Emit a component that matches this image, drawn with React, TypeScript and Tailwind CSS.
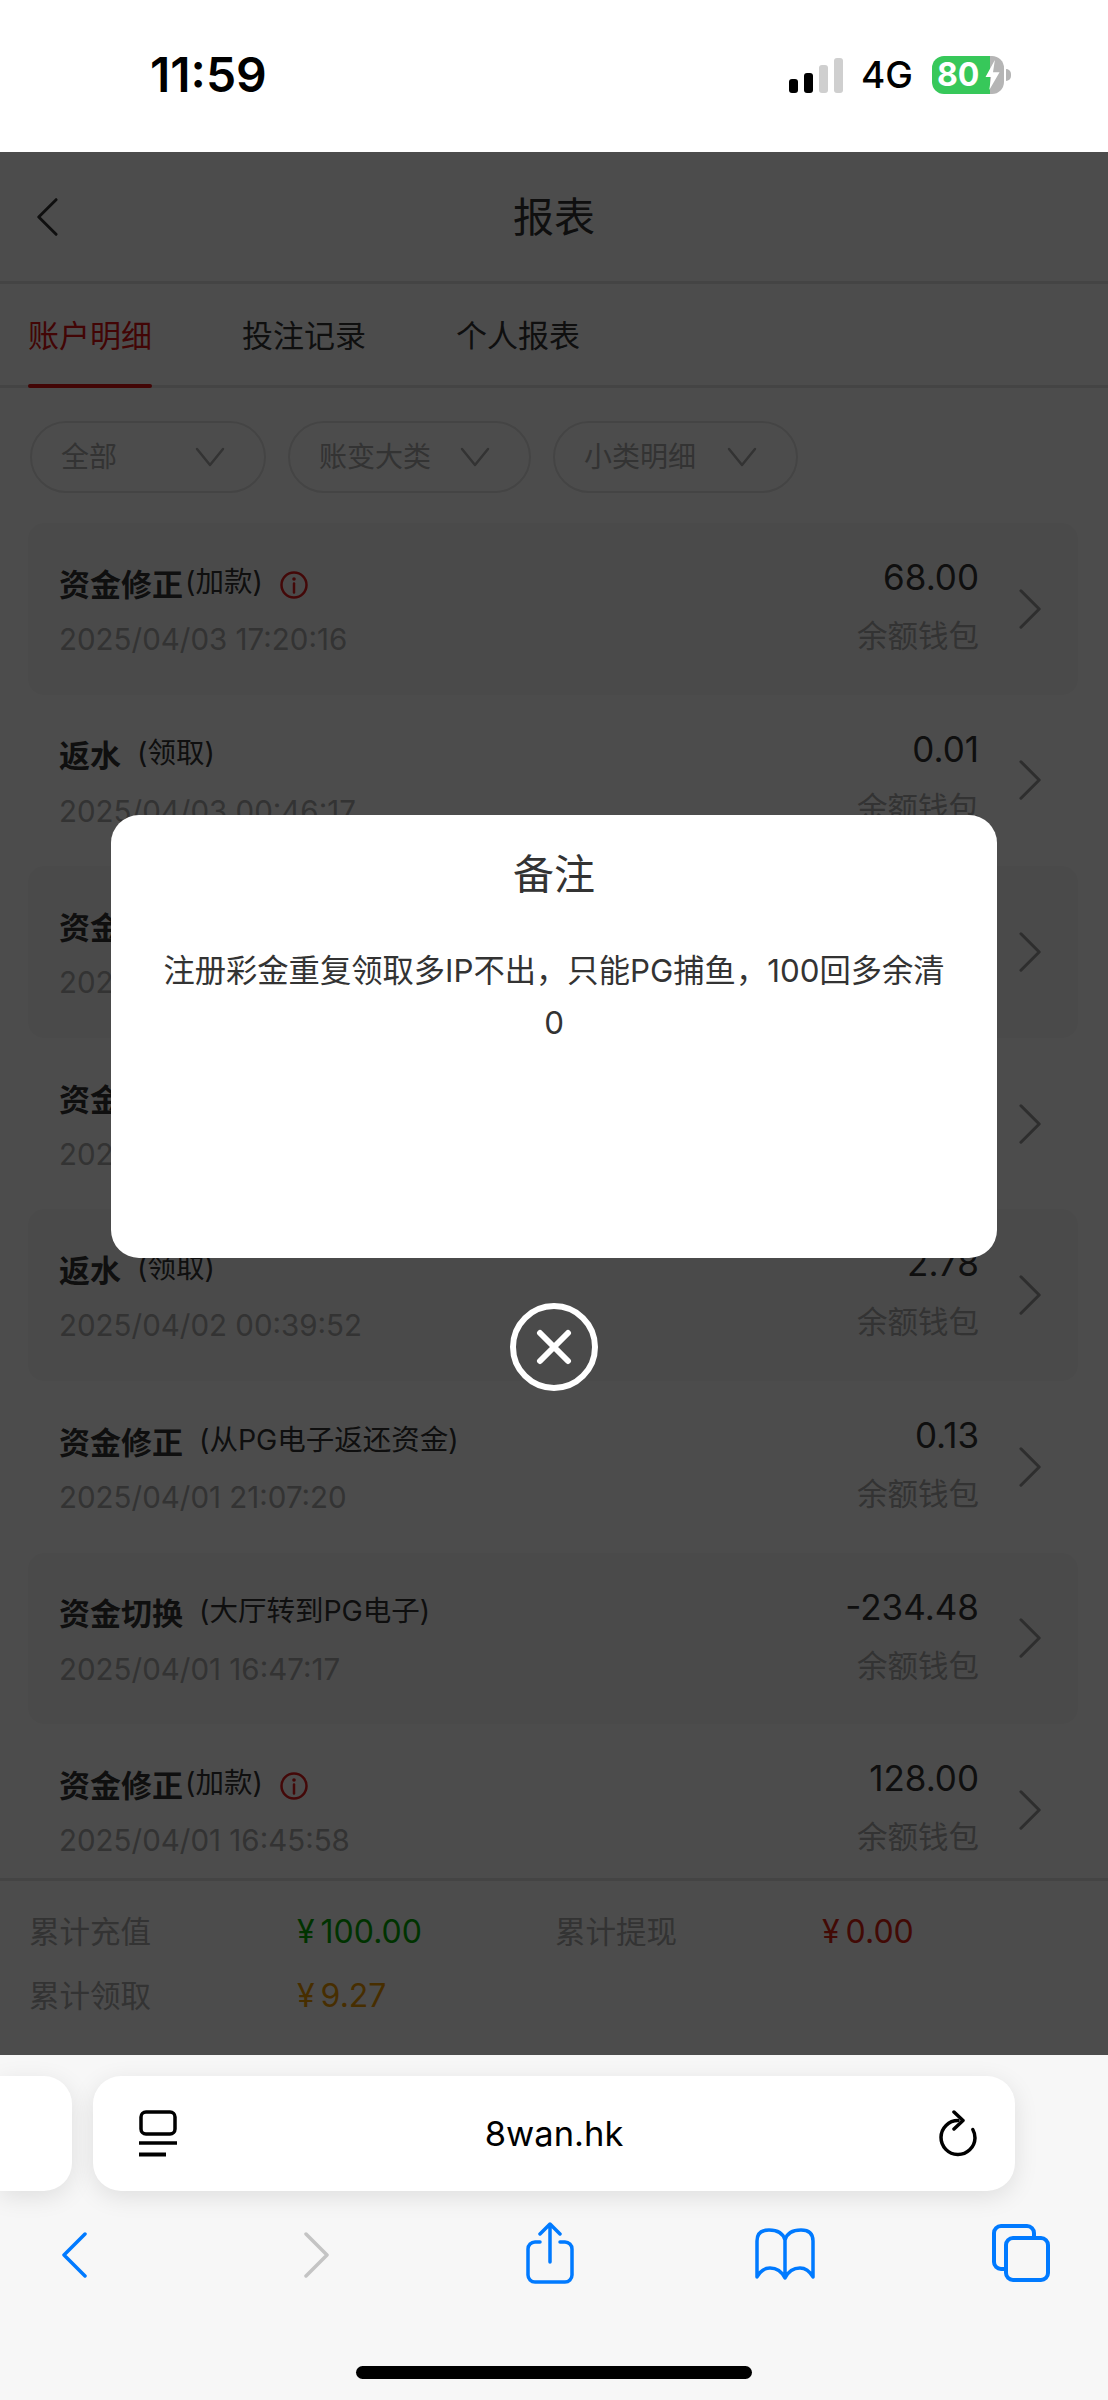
const rows = [
  { title: "资金修正", sub: "(加款)", info: true, date: "2025/04/03 17:20:16", amount: "68.00", wallet: "余额钱包" },
  { title: "返水", sub: "(领取)", date: "2025/04/03 00:46:17", amount: "0.01", wallet: "余额钱包" },
  // the next two sit behind the dialog, only the start of each line shows
  { title: "资金", date: "2025" },
  { title: "资金", date: "2025" },
  { title: "返水", sub: "(领取)", date: "2025/04/02 00:39:52", amount: "2.78", wallet: "余额钱包" },
  { title: "资金修正", sub: "(从PG电子返还资金)", date: "2025/04/01 21:07:20", amount: "0.13", wallet: "余额钱包" },
  { title: "资金切换", sub: "(大厅转到PG电子)", date: "2025/04/01 16:47:17", amount: "-234.48", wallet: "余额钱包" },
  { title: "资金修正", sub: "(加款)", info: true, date: "2025/04/01 16:45:58", amount: "128.00", wallet: "余额钱包" },
];

type RowData = { title: string; sub?: string; info?: boolean; date: string; amount?: string; wallet?: string };

function Chevron({ dir, className }: { dir: "left" | "right"; className: string }) {
  return (
    <svg viewBox="0 0 26 46" fill="none" stroke="currentColor" strokeWidth="3.5" strokeLinecap="round" strokeLinejoin="round" className={className}>
      {dir === "left" ? <path d="M24 2 3 23l21 21" /> : <path d="M2 2l21 21L2 44" />}
    </svg>
  );
}

function Down() {
  return (
    <svg viewBox="0 0 30 20" fill="none" stroke="currentColor" strokeWidth="2.5" strokeLinecap="round" strokeLinejoin="round" className="w-[30px] h-[20px] text-[#aaaaaa]">
      <path d="M2 2l13 16L28 2" />
    </svg>
  );
}

function Info() {
  return (
    <svg viewBox="0 0 28 28" fill="none" className="w-[28px] h-[28px] text-[#e11d1d] ml-[17px] shrink-0">
      <circle cx="14" cy="14" r="12.5" stroke="currentColor" strokeWidth="2.5" />
      <circle cx="14" cy="8" r="1.8" fill="currentColor" />
      <path d="M14 12.5v9" stroke="currentColor" strokeWidth="2.5" strokeLinecap="round" />
    </svg>
  );
}

function Row({ row, shaded }: { row: RowData; shaded: boolean }) {
  return (
    <div className={`h-[171.6px] shrink-0 rounded-[16px] flex pl-[31px] pr-[35px] ${shaded ? "bg-[#f9f9f9]" : ""}`}>
      <div className="flex-1 pt-[40px]">
        <div className="flex items-center h-[44px]">
          <span className="text-[31px] font-bold text-[#333333]">{row.title}</span>
          {row.sub && (
            <span className={`text-[28.5px] text-[#333333] relative -top-[3px] ${row.info ? "ml-[2px]" : "ml-[16px]"}`}>{row.sub}</span>
          )}
          {row.info && <Info />}
        </div>
        <div className="mt-[12px] text-[29.5px] leading-[40px] text-[#aaaaaa]">{row.date}</div>
      </div>
      <div className="flex flex-col items-end pt-[32px]">
        <div className="text-[35px] leading-[44px] text-[#333333]">{row.amount}</div>
        <div className="mt-[17px] text-[30.5px] leading-[40px] text-[#aaaaaa]">{row.wallet}</div>
      </div>
      <div className="w-[64px] flex items-center justify-end">
        <Chevron dir="right" className="w-[25px] h-[40px] text-[#999999]" />
      </div>
    </div>
  );
}

export default function App() {
  return (
    <div className="w-[1108px] h-[2400px] overflow-hidden bg-white flex flex-col font-['Inter','Noto_Sans_CJK_SC',sans-serif]">
      {/* ios status bar */}
      <div className="h-[152px] shrink-0 flex items-center pl-[150px] pr-[97px] pb-[2px]">
        <div className="text-[48px] font-semibold text-black">11:59</div>
        <div className="ml-auto flex items-center">
          <div className="flex items-end gap-[6px] h-[35px]">
            <div className="w-[9px] h-[14px] rounded-[3px] bg-black" />
            <div className="w-[9px] h-[20px] rounded-[3px] bg-black" />
            <div className="w-[9px] h-[28px] rounded-[3px] bg-[#cfcfcf]" />
            <div className="w-[9px] h-[35px] rounded-[3px] bg-[#cfcfcf]" />
          </div>
          <div className="ml-[18px] text-[37px] font-medium text-black">4G</div>
          <div className="ml-[19px] relative flex items-center">
            <div className="w-[72px] h-[38px] rounded-[12px] overflow-hidden flex">
              <div className="w-[58px] bg-[#37c85a] flex items-center pl-[5px] text-[32px] font-bold text-white">80</div>
              <div className="w-[14px] bg-[#b5b5b5]" />
            </div>
            <svg viewBox="0 0 18 32" className="absolute left-[52px] top-[4px] w-[18px] h-[30px] text-white">
              <path d="M11 0 1 18h6l-2 14 11-19h-7z" fill="currentColor" />
            </svg>
            <div className="ml-[2px] w-[5px] h-[12px] rounded-r-full bg-[#b5b5b5]" />
          </div>
        </div>
      </div>

      {/* page under the dialog */}
      <div className="h-[1903px] shrink-0 relative flex flex-col">
        <div className="h-[132px] shrink-0 relative flex items-center justify-center pt-[3px] border-b-[3px] border-[#e3e3e3]">
          <Chevron dir="left" className="absolute left-[35px] top-[46px] w-[24px] h-[38px] text-[#333333]" />
          <div className="text-[41px] text-[#333333]">报表</div>
        </div>
        <div className="h-[104px] shrink-0 flex pl-[28px] gap-[90px] pt-[3px] border-b-[3px] border-[#e3e3e3] text-[31px] text-[#333333]">
          <div className="h-full w-[124px] relative flex items-center text-[#dd1111] whitespace-nowrap">
            账户明细
            <div className="absolute left-0 right-0 -bottom-[3px] h-[4px] rounded-[2px] bg-[#dd1111]" />
          </div>
          <div className="flex items-center">投注记录</div>
          <div className="flex items-center">个人报表</div>
        </div>
        <div className="shrink-0 flex pl-[30px] pt-[33px] pb-[30px] gap-[22px] text-[28px] text-[#aaaaaa]">
          {[["全部", "w-[236px]"], ["账变大类", "w-[243px]"], ["小类明细", "w-[245px]"]].map(([label, w]) => (
            <div key={label} className={`${w} h-[72px] rounded-[36px] border-[2px] border-[#e3e3e3] flex items-center justify-between pl-[29px] pr-[39px]`}>
              <span>{label}</span>
              <Down />
            </div>
          ))}
        </div>
        <div className="flex-1 min-h-0 overflow-hidden pl-[28px] pr-[30px] flex flex-col">
          {rows.map((row, i) => (
            <Row key={i} row={row} shaded={i % 2 === 0} />
          ))}
        </div>
        <div className="h-[177px] shrink-0 border-t-[3px] border-[#e3e3e3] pt-[19px] pl-[29px] grid grid-cols-[268px_258px_267px_1fr] auto-rows-[64px] items-center text-[30.5px] text-[#aaaaaa]">
          <div>累计充值</div>
          <div className="text-[32px] text-[#00aa00]">¥<span className="ml-[6px]">100.00</span></div>
          <div>累计提现</div>
          <div className="text-[32px] text-[#dd2211]">¥<span className="ml-[6px]">0.00</span></div>
          <div>累计领取</div>
          <div className="text-[32px] text-[#ee9900]">¥<span className="ml-[6px]">9.27</span></div>
        </div>

        {/* dim layer + dialog */}
        <div className="absolute inset-0 bg-black/70 flex flex-col items-center pt-[663px]">
          <div className="w-[886px] h-[443px] rounded-[28px] bg-white text-center text-[#333333] px-[50px] shrink-0">
            <div className="mt-[34px] text-[41px] leading-[50px]">备注</div>
            <div className="mt-[46px] text-[31.3px] leading-[52px]">注册彩金重复领取多IP不出，只能PG捕鱼，100回多余清0</div>
          </div>
          <div className="mt-[45px] w-[88px] h-[88px] rounded-full border-[6px] border-white flex items-center justify-center">
            <svg viewBox="0 0 36 36" fill="none" stroke="white" strokeWidth="6" strokeLinecap="round" className="w-[36px] h-[36px]">
              <path d="M4 4l28 28M32 4 4 32" />
            </svg>
          </div>
        </div>
      </div>

      {/* safari bottom bar */}
      <div className="flex-1 bg-[#f7f7f7] flex flex-col">
        <div className="flex pt-[21px] gap-[21px]">
          <div className="w-[72px] h-[115px] rounded-r-[28px] bg-white shadow-[0_6px_24px_rgba(0,0,0,0.1)]" />
          <div className="w-[922px] h-[115px] rounded-[28px] bg-white shadow-[0_6px_24px_rgba(0,0,0,0.1)] flex items-center pl-[46px] pr-[38px]">
            <div className="flex-1">
              <svg viewBox="0 0 38 48" fill="none" stroke="black" strokeWidth="3.5" className="w-[38px] h-[48px]">
                <rect x="2" y="2" width="34" height="22" rx="5" />
                <path d="M0 33h38" />
                <path d="M0 44.5h27" strokeWidth="4" />
              </svg>
            </div>
            <div className="text-[34.5px] text-black mr-[8px]">8wan.hk</div>
            <div className="flex-1 flex justify-end">
              <svg viewBox="0 0 38 48" fill="none" stroke="black" strokeWidth="3.5" strokeLinecap="round" strokeLinejoin="round" className="w-[38px] h-[48px]">
                <path d="M19 10.5A17 17 0 1 0 36 28c0-3-.8-6-2.2-8.5" />
                <path d="M15 2l9 8.5-9 8.5" />
              </svg>
            </div>
          </div>
        </div>
        <div className="flex pl-[61px] mt-[33px] items-start text-[#007aff] h-[60px]">
          <Chevron dir="left" className="w-[26px] h-[46px] mt-[8px]" />
          <Chevron dir="right" className="w-[26px] h-[46px] mt-[8px] ml-[217px] text-[#c4c4c4]" />
          <svg viewBox="0 0 48 62" fill="none" stroke="currentColor" strokeWidth="3.5" strokeLinecap="round" strokeLinejoin="round" className="w-[48px] h-[62px] -mt-[2px] ml-[196px]">
            <path d="M14 20H9a7 7 0 0 0-7 7v26a7 7 0 0 0 7 7h30a7 7 0 0 0 7-7V27a7 7 0 0 0-7-7h-5" />
            <path d="M24 40V3M14 12l10-10 10 10" />
          </svg>
          <svg viewBox="0 0 60 52" fill="none" stroke="currentColor" strokeWidth="3.5" strokeLinecap="round" strokeLinejoin="round" className="w-[60px] h-[52px] mt-[4px] ml-[181px]">
            <path d="M30 12C28 5 22 2 14 2 6 2 2 6 2 13v36c4-7 8-9 13-9 7 0 12 4 15 10 3-6 8-10 15-10 5 0 9 2 13 9V13c0-7-4-11-12-11-8 0-14 3-16 10Zm0 0v36" />
          </svg>
          <svg viewBox="0 0 58 58" fill="none" stroke="currentColor" strokeWidth="4" strokeLinecap="round" strokeLinejoin="round" className="w-[58px] h-[58px] ml-[177px]">
            <path d="M42 14V9a7 7 0 0 0-7-7H9a7 7 0 0 0-7 7v29a7 7 0 0 0 7 7h5" />
            <rect x="14" y="14" width="42" height="42" rx="7" />
          </svg>
        </div>
        <div className="mt-auto mb-[21px] mx-auto w-[396px] h-[13px] rounded-full bg-black" />
      </div>
    </div>
  );
}
